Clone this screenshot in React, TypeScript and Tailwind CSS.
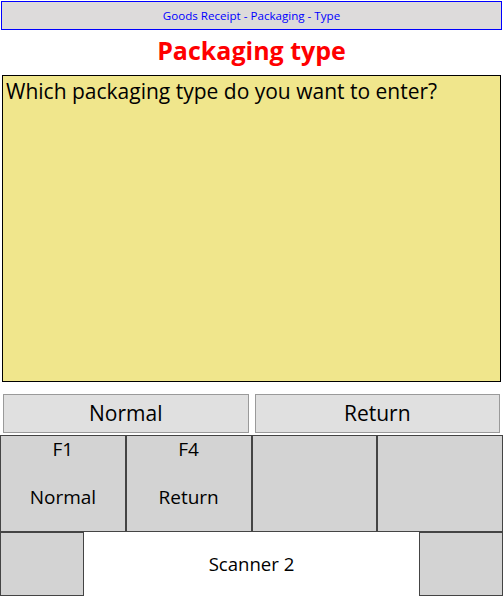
const font = { fontFamily: '"Open Sans", "Noto Sans", sans-serif' };

function FKey({ k, label }: { k?: string; label?: string }) {
  return (
    <div className="flex flex-col items-center border border-[#444444] bg-[#d3d3d3] text-[19px] text-black">
      <div className="mt-[1px] h-[24px] leading-[24px]">{k}</div>
      <div className="mt-[24px] leading-[24px]">{label}</div>
    </div>
  );
}

export default function App() {
  return (
    <div className="flex h-[596px] w-[503px] flex-col bg-white" style={font}>
      <div className="mx-[1px] mt-[1px] flex h-[29px] items-center justify-center border border-[#0000ff] bg-[#dddbdb] text-[11.6px] text-[#0000ff]">
        Goods Receipt - Packaging - Type
      </div>

      <div className="flex h-[45px] items-center justify-center pb-[3px] text-[25px] font-bold text-[#ff0000]">
        Packaging type
      </div>

      <div className="mx-[2px] h-[307px] border border-black bg-[#f0e68c] px-[3px] text-[21px] leading-[30px] text-black">
        Which packaging type do you want to enter?
      </div>

      <div className="mt-[12px] flex h-[39px] gap-[6px] px-[3px] text-[21px] text-black">
        <div className="flex flex-1 items-center justify-center border border-[#9a9a9a] bg-[#e0e0e0]">Normal</div>
        <div className="flex flex-1 items-center justify-center border border-[#9a9a9a] bg-[#e0e0e0]">Return</div>
      </div>

      <div className="mt-[2px] grid h-[97px] grid-cols-4">
        <FKey k="F1" label="Normal" />
        <FKey k="F4" label="Return" />
        <FKey />
        <FKey />
      </div>

      <div className="flex flex-1">
        <div className="w-[84px] border border-[#444444] bg-[#d3d3d3]" />
        <div className="flex flex-1 items-center justify-center text-[18.6px] text-black">Scanner 2</div>
        <div className="w-[84px] border border-[#444444] bg-[#d3d3d3]" />
      </div>
    </div>
  );
}
